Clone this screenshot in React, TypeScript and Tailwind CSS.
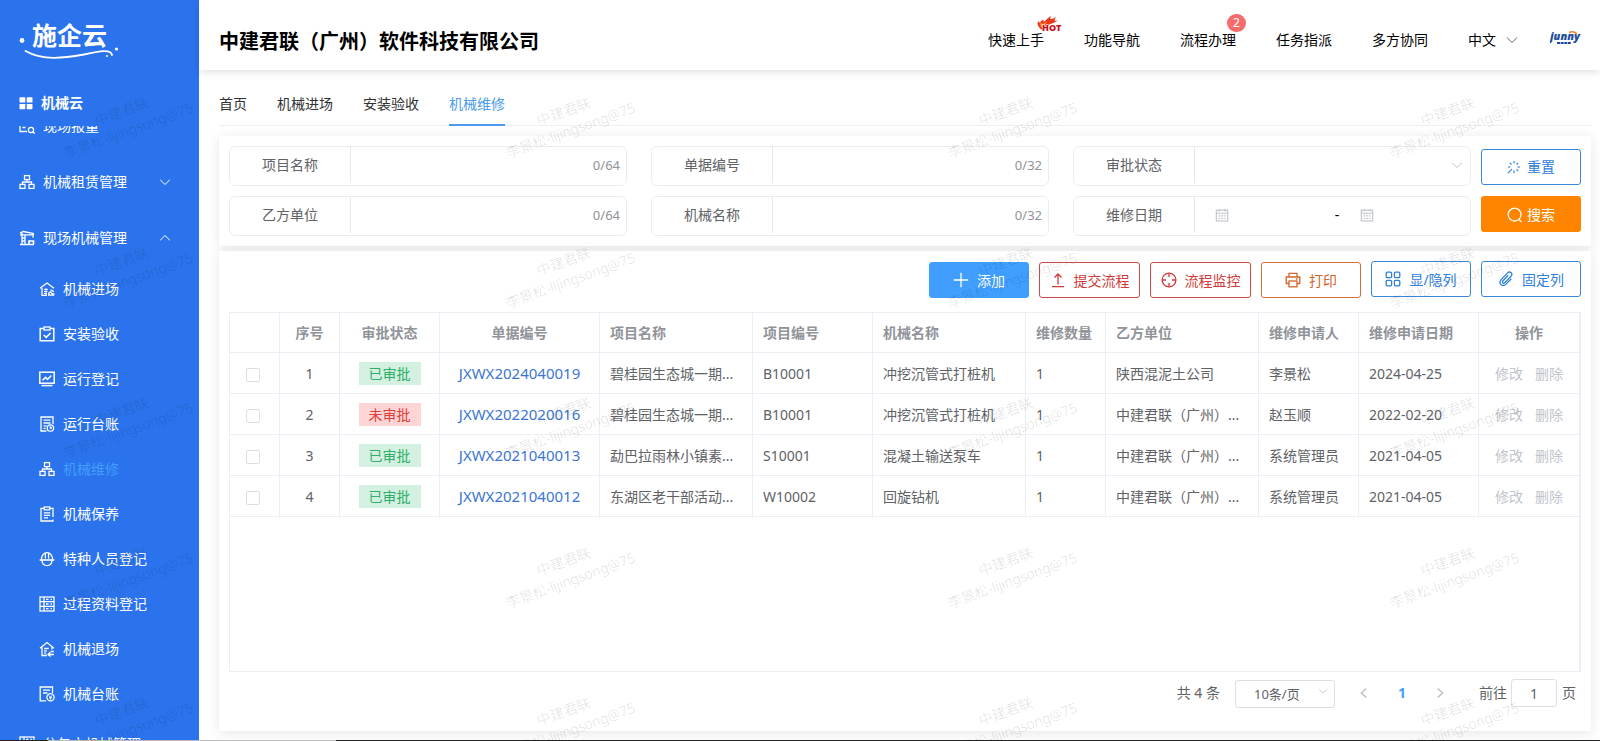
import { useState } from "react";
import type { ReactNode } from "react";

type IconProps = { className?: string; children: ReactNode };

const Icon = ({ className = "size-4", children }: IconProps) => (
    <svg
        viewBox="0 0 16 16"
        fill="none"
        stroke="currentColor"
        strokeWidth="1.3"
        className={`shrink-0 ${className}`}
        aria-hidden="true">
        {children}
    </svg>
);

const icons = {
    grid: (
        <g fill="currentColor" stroke="none">
            <rect x="0.6" y="1.5" width="6.6" height="6" rx="0.6" />
            <rect x="8.8" y="1.5" width="6.6" height="6" rx="0.6" />
            <rect x="0.6" y="9" width="6.6" height="6" rx="0.6" />
            <rect x="8.8" y="9" width="6.6" height="6" rx="0.6" />
        </g>
    ),
    report: (
        <>
            <path d="M8 13.5H1V3h13v4" />
            <circle cx="12" cy="12" r="2.6" />
            <path d="M13.8 13.8l2 2M3.5 6.500h5M3.5 9.500h3" />
        </>
    ),
    network: (
        <>
            <rect x="5.5" y="1.6" width="5" height="4" />
            <rect x="1" y="10.4" width="5" height="4" />
            <rect x="10" y="10.4" width="5" height="4" />
            <path d="M8 5.6V8M3.5 10.4V8h9v2.4" />
        </>
    ),
    crane: (
        <>
            <path d="M1 3.200L4.500 1.500 15 3.600M1 4.800h14M14 4.800v3M3 2v12.500M6 5v9.500M3 8h3M3 11h3" />
            <path d="M1 14.500h14M10 14v-3h4.500v3" strokeWidth="1.7" />
        </>
    ),
    houseIn: (
        <>
            <path d="M1 7.2L8 2l7 5.2M3 7v7.4h5" />
            <path d="M5 8.5h4M5 10.5h3.5M5 12.5h3M7 7v7" strokeWidth="1" />
            <path d="M9 14.2h6M9.6 14c0-2 1-3.2 2.2-3.2l1.2 2h1.8v1.4M11.5 9.2c1.6-.4 2.6.4 3 2" />
        </>
    ),
    clipCheck: (
        <>
            <path d="M5 2.4H1.2v12.4h13.6V2.4H11" strokeWidth="1.5" />
            <rect x="5" y="1" width="6" height="3" />
            <path d="M4.8 9l2.4 2.4 4.4-4.4" strokeWidth="1.6" />
        </>
    ),
    chart: (
        <>
            <rect x="0.8" y="1.2" width="14.4" height="11" strokeWidth="1.5" />
            <path d="M3.5 9.4l3-3 2 2 3.8-4" strokeWidth="1.5" />
            <path d="M2.5 14.6h11" strokeWidth="1.5" />
        </>
    ),
    ledger: (
        <>
            <path d="M7.5 15H2V1h12v7M4.5 4.2h7M4.5 7h7M4.5 9.8h3M4.5 12.4h2" />
            <circle cx="11.4" cy="12" r="3.2" />
            <path d="M11.4 10.2v1.8h1.6" />
        </>
    ),
    clipList: (
        <>
            <path d="M5 2.4H2V15h12v-1.6M14 11V2.4h-3" />
            <rect x="5.2" y="1" width="5.6" height="2.8" />
            <path d="M4.8 6.8h6.4M4.8 9.3h6.4M4.8 11.8h4.2" />
        </>
    ),
    helmet: (
        <>
            <path d="M2.4 8.6C2.4 4.6 4.8 1.6 8 1.6s5.6 3 5.6 7M6.400 2.4v5M9.600 2.4v5" />
            <path d="M0.6 9h14.8" strokeWidth="1.6" />
            <path d="M2.8 9c.4 3.4 2.4 5.6 5.2 5.6s4.8-2.2 5.2-5.6" />
        </>
    ),
    server: (
        <>
            <rect x="1" y="1" width="14" height="14" />
            <path d="M1 5.6h14M1 10.3h14M5 1v14M7 3.4h2.500M11.500 3.4h1.500M7 8h2.500M11.500 8h1.500M7 12.6h2.500M11.500 12.6h1.500" />
        </>
    ),
    houseOut: (
        <>
            <path d="M1 7.2L8 1.6l7 5.6M3 6.5v8h5M13 6v2.5" />
            <path d="M5.2 7.5h4.5M5.2 10h2.5M5.2 12.2h2M15 13.5H9.500M11.5 11l-2.5 2.5 2.5 2M14.8 10.5h-3" />
        </>
    ),
    invoice: (
        <>
            <path d="M7 14.8H1.2V1h12.3v6M4 4.2h7M4 7h4.5" />
            <circle cx="11.5" cy="11.2" r="3.6" />
            <path d="M9.9 9.4l1.6 1.9 1.6-1.9M11.5 11.3v2.3M10 11.8h3" strokeWidth="1" />
        </>
    ),
    down: <path d="M1.5 5L8 11.300 14.5 5" />,
    up: <path d="M1.5 11L8 4.7l6.5 6.3" />,
    left: <path d="M10.5 3L5 8l5.5 5" strokeWidth="1.8" />,
    right: <path d="M5.5 3L11 8l-5.5 5" strokeWidth="1.8" />,
    sparkle: (
        <path d="M8 1v3M8 12v3M12 8h3M3.2 3.2l2 2M10.8 10.8l2 2M12.8 3.2l-2 2M1 8h3M5.6 10.4L1 15" />
    ),
    search: (
        <>
            <circle cx="7.6" cy="7.6" r="6.4" />
            <path d="M11.8 12.3l2.7 2.7" />
        </>
    ),
    plus: <path d="M8 .8v14.4M.8 8h14.4" />,
    upload: <path d="M8 12.5V2M4.500 5.500L8 2l3.500 3.500M2 14.6h12" />,
    monitor: (
        <>
            <circle cx="8" cy="8" r="6.9" />
            <path d="M8 1v4M8 11v4M1 8h4M11 8h4" />
        </>
    ),
    printer: (
        <>
            <path d="M4 5V1.300h8V5M4 11.500H1.2V5h13.600v6.500H12" />
            <rect x="4" y="9" width="8" height="5.8" />
            <path d="M11 7h1.5" />
        </>
    ),
    blocks: (
        <>
            <rect x="1.2" y="1.2" width="5.4" height="5.4" rx="1" />
            <rect x="9.4" y="1.2" width="5.4" height="5.4" rx="1" />
            <rect x="1.2" y="9.4" width="5.4" height="5.4" rx="1" />
            <rect x="9.4" y="9.4" width="5.4" height="5.4" rx="1" />
        </>
    ),
    clip: (
        <path d="M10.2 4.2L4.900 9.8c-1.3 1.4.5 3.2 1.9 1.9L13 5.200c2.3-2.5-.9-5.7-3.4-3.3L3.3 8.4c-3.5 3.7 1.2 8.3 4.8 4.7l5.2-5.4" />
    ),
    calendar: (
        <>
            <rect x="1.5" y="2.5" width="13" height="12.3" />
            <path d="M1.5 6h13M4.8 1v3M11.2 1v3M4 9h2M7 9h2M10 9h2M4 12h2M7 12h2M10 12h2" />
        </>
    ),
};

type IconName = keyof typeof icons;

const subMenu: { icon: IconName; label: string }[] = [
    { icon: "houseIn", label: "机械进场" },
    { icon: "clipCheck", label: "安装验收" },
    { icon: "chart", label: "运行登记" },
    { icon: "ledger", label: "运行台账" },
    { icon: "network", label: "机械维修" },
    { icon: "clipList", label: "机械保养" },
    { icon: "helmet", label: "特种人员登记" },
    { icon: "server", label: "过程资料登记" },
    { icon: "houseOut", label: "机械退场" },
    { icon: "invoice", label: "机械台账" },
];

const MenuGroup = ({
    icon,
    label,
    arrow,
}: {
    icon: IconName;
    label: string;
    arrow?: IconName;
}) => (
    <button className="flex h-14 w-full shrink-0 items-center pl-[19px] pr-7 text-left">
        <Icon>{icons[icon]}</Icon>
        <span className="ml-2 flex-1">{label}</span>
        {arrow && <Icon className="size-3">{icons[arrow]}</Icon>}
    </button>
);

const Sidebar = () => (
    <aside className="flex w-[199px] shrink-0 flex-col overflow-hidden bg-[#2b73ec] text-sm text-white">
        <a href="#" className="mt-5 block pl-4">
            <svg width="110" height="42" viewBox="0 0 110 42" fill="none">
                <text
                    x="16"
                    y="25"
                    fill="white"
                    fontSize="25"
                    fontWeight="700"
                    fontFamily="'Noto Sans CJK SC', sans-serif">
                    施企云
                </text>
                <circle cx="6" cy="20.5" r="2.4" fill="white" />
                <circle cx="100.5" cy="29" r="1.6" fill="white" />
                <circle cx="91" cy="36" r="1" fill="white" />
                <path
                    d="M9.5 31C27 41 48 38 68 34.500 84 31 95 29 96 35"
                    stroke="white"
                    strokeWidth="1.8"
                    strokeLinecap="round"
                />
            </svg>
        </a>
        <div className="mt-8 flex h-[18px] items-center pl-[19px] font-bold">
            <Icon className="size-[14px]">{icons.grid}</Icon>
            <span className="ml-2">机械云</span>
        </div>
        <nav className="mt-[14px] flex-1 overflow-hidden">
            <div className="-mt-7 flex flex-col">
                <MenuGroup icon="report" label="现场报量" />
                <MenuGroup icon="network" label="机械租赁管理" arrow="down" />
                <MenuGroup icon="crane" label="现场机械管理" arrow="up" />
                {subMenu.map((item) => (
                    <a
                        key={item.label}
                        href="#"
                        className="flex h-[45px] shrink-0 items-center gap-2 pl-[39px]">
                        <Icon>{icons[item.icon]}</Icon>
                        <span
                            className={
                                item.label === "机械维修"
                                    ? "text-[#409eff]"
                                    : ""
                            }>
                            {item.label}
                        </span>
                    </a>
                ))}
                <MenuGroup icon="server" label="分包方机械管理" arrow="down" />
            </div>
        </nav>
    </aside>
);

const HotIcon = () => (
    <svg
        className="absolute -right-[19px] -top-[14px]"
        width="26"
        height="16"
        viewBox="0 0 26 16"
        aria-hidden="true">
        <path
            d="M5 14C1 11 0 8 1 5l2 2c0-2 2-3 4-3L6 6c3-1 4-4 8-6-1 2-1 3 0 3 2 0 3-1 5-2-1 2-2 3-1 4l3-.5c-3 2-5 3-8 3.5L9 12z"
            fill="#e8391c"
        />
        <path d="M5 12C3 10 3 8 4 6l1 2c2 0 3-2 5-2-2 2-3 3-3 6z" fill="#ffa52b" />
        <text
            x="5"
            y="15"
            fill="#c8101a"
            stroke="white"
            strokeWidth="1"
            paintOrder="stroke"
            fontSize="9"
            fontWeight="900"
            fontFamily="'Open Sans', sans-serif">
            HOT
        </text>
    </svg>
);

const Header = () => (
    <header className="z-10 flex h-[70px] shrink-0 items-center justify-between bg-white pl-5 pr-[19px] shadow-[0_2px_8px_rgba(0,0,0,0.12)]">
        <h1 className="pt-[14px] text-xl font-bold text-black">
            中建君联（广州）软件科技有限公司
        </h1>
        <nav className="flex items-center gap-10 pt-[10px] text-sm text-black">
            <a href="#" className="relative">
                快速上手
                <HotIcon />
            </a>
            <a href="#">功能导航</a>
            <a href="#" className="relative">
                流程办理
                <span className="absolute -right-[10px] -top-4 flex h-[18px] w-[19px] items-center justify-center rounded-full bg-[#f56c6c] text-xs text-white">
                    2
                </span>
            </a>
            <a href="#">任务指派</a>
            <a href="#">多方协同</a>
            <button className="flex items-center gap-[10px]">
                中文
                <Icon className="size-3 text-[#606266]">{icons.down}</Icon>
            </button>
            <a href="#" className="-ml-2 -mt-1" aria-label="junny">
                <svg width="31" height="15" viewBox="0 0 31 15">
                    <text
                        x="0"
                        y="9"
                        fill="#1d4c9a"
                        fontSize="11"
                        fontWeight="800"
                        fontStyle="italic"
                        fontFamily="'Open Sans', sans-serif">
                        junny
                    </text>
                    <path d="M19 1.500c4-1.500 7-.500 8 2.500" stroke="#f08232" strokeWidth="1.5" fill="none" />
                    <path d="M7 12h14" stroke="#1d4c9a" strokeWidth="2" strokeDasharray="3 0.6" />
                </svg>
            </a>
        </nav>
    </header>
);

const tabs = ["首页", "机械进场", "安装验收", "机械维修"];

const Tabs = () => {
    const [active, setActive] = useState("机械维修");
    return (
        <div className="flex h-14 shrink-0 gap-[30px] border-b border-[#ebeef5] text-sm text-[#303133]">
            {tabs.map((tab) => (
                <button
                    key={tab}
                    onClick={() => setActive(tab)}
                    className={`-mb-px border-b-2 pt-[14px] ${active === tab
                            ? "border-[#4a9bea] text-[#4a9bea]"
                            : "border-transparent"
                        }`}>
                    {tab}
                </button>
            ))}
        </div>
    );
};

const Field = ({
    id,
    label,
    children,
}: {
    id: string;
    label: string;
    children: ReactNode;
}) => (
    <div className="flex h-10 items-start rounded-md border border-[#ebeef0]">
        <label
            htmlFor={id}
            className="flex h-9 w-[121px] shrink-0 items-center justify-center border-r border-[#e6e8eb] text-sm text-[#606266]">
            {label}
        </label>
        <div className="flex h-9 min-w-0 flex-1 items-center">{children}</div>
    </div>
);

const TextField = ({
    id,
    label,
    max,
}: {
    id: string;
    label: string;
    max: number;
}) => {
    const [value, setValue] = useState("");
    return (
        <Field id={id} label={label}>
            <input
                id={id}
                value={value}
                maxLength={max}
                onChange={(e) => setValue(e.target.value)}
                className="h-full min-w-0 flex-1 px-3 text-sm outline-none"
            />
            <span className="pr-1.5 pt-0.5 text-[13px] text-[#909399]">
                {value.length}/{max}
            </span>
        </Field>
    );
};

const SearchForm = () => (
    <form
        onSubmit={(e) => e.preventDefault()}
        className="mt-[10px] flex shrink-0 gap-[10px] bg-white p-[10px] shadow-[0_2px_12px_rgba(0,0,0,0.1)]">
        <div className="grid flex-1 grid-cols-3 gap-x-6 gap-y-[10px]">
            <TextField id="project" label="项目名称" max={64} />
            <TextField id="billNo" label="单据编号" max={32} />
            <Field id="status" label="审批状态">
                <select
                    id="status"
                    className="h-full min-w-0 flex-1 appearance-none px-3 text-sm outline-none">
                    <option value=""></option>
                </select>
                <Icon className="mr-[7px] size-3 text-[#c0c4cc]">
                    {icons.down}
                </Icon>
            </Field>
            <TextField id="partyB" label="乙方单位" max={64} />
            <TextField id="machine" label="机械名称" max={32} />
            <Field id="dateFrom" label="维修日期">
                <div className="flex min-w-0 flex-1 items-center pl-5 text-sm text-black">
                    <Icon className="size-[14px] text-[#c0c4cc]">
                        {icons.calendar}
                    </Icon>
                    <input
                        id="dateFrom"
                        className="w-[103px] min-w-0 px-2 outline-none"
                    />
                    <span className="w-[10px] text-center">-</span>
                    <Icon className="ml-[18px] size-[14px] text-[#c0c4cc]">
                        {icons.calendar}
                    </Icon>
                    <input
                        aria-label="维修日期"
                        className="w-[90px] min-w-0 px-2 outline-none"
                    />
                </div>
            </Field>
        </div>
        <div className="flex w-[100px] flex-col gap-[11px] pt-[3px]">
            <button
                type="reset"
                className="flex h-9 items-center justify-center gap-1.5 rounded-[3px] border border-[#3a87d9] bg-white text-sm text-[#2f80d8]">
                <Icon className="size-[14px]">{icons.sparkle}</Icon>
                重置
            </button>
            <button
                type="submit"
                className="flex h-9 items-center justify-center gap-1 rounded-[3px] bg-[#ff8500] pt-0.5 text-sm text-white">
                <Icon>{icons.search}</Icon>
                搜索
            </button>
        </div>
    </form>
);

const actions: { icon: IconName; label: string; style: string }[] = [
    {
        icon: "plus",
        label: "添加",
        style: "mt-px w-[100px] border-[#409eff] bg-[#409eff] text-white",
    },
    {
        icon: "upload",
        label: "提交流程",
        style: "mt-px w-[101px] border-[#cd4a48] text-[#cf3b38]",
    },
    {
        icon: "monitor",
        label: "流程监控",
        style: "mt-px w-[101px] border-[#cd4a48] text-[#cf3b38]",
    },
    {
        icon: "printer",
        label: "打印",
        style: "mt-px w-[100px] border-[#d0703a] text-[#d0662a]",
    },
    {
        icon: "blocks",
        label: "显/隐列",
        style: "w-[100px] border-[#3a87d9] text-[#2f80d8]",
    },
    {
        icon: "clip",
        label: "固定列",
        style: "w-[100px] border-[#3a87d9] text-[#2f80d8]",
    },
];

const columns = [
    { label: "", width: "w-[50px]" },
    { label: "序号", width: "w-[60px]", center: true },
    { label: "审批状态", width: "w-[100px]", center: true },
    { label: "单据编号", width: "w-[160px]", center: true },
    { label: "项目名称", width: "" },
    { label: "项目编号", width: "w-[120px]" },
    { label: "机械名称", width: "" },
    { label: "维修数量", width: "w-[80px]" },
    { label: "乙方单位", width: "" },
    { label: "维修申请人", width: "w-[100px]" },
    { label: "维修申请日期", width: "w-[120px]" },
    { label: "操作", width: "w-[100px]", center: true },
];

const rows = [
    {
        approved: true,
        bill: "JXWX2024040019",
        project: "碧桂园生态城一期...",
        code: "B10001",
        machine: "冲挖沉管式打桩机",
        party: "陕西混泥土公司",
        applicant: "李景松",
        date: "2024-04-25",
    },
    {
        approved: false,
        bill: "JXWX2022020016",
        project: "碧桂园生态城一期...",
        code: "B10001",
        machine: "冲挖沉管式打桩机",
        party: "中建君联（广州）...",
        applicant: "赵玉顺",
        date: "2022-02-20",
    },
    {
        approved: true,
        bill: "JXWX2021040013",
        project: "勐巴拉雨林小镇素...",
        code: "S10001",
        machine: "混凝土输送泵车",
        party: "中建君联（广州）...",
        applicant: "系统管理员",
        date: "2021-04-05",
    },
    {
        approved: true,
        bill: "JXWX2021040012",
        project: "东湖区老干部活动...",
        code: "W10002",
        machine: "回旋钻机",
        party: "中建君联（广州）...",
        applicant: "系统管理员",
        date: "2021-04-05",
    },
];

const cell = "truncate border-b border-r border-[#ebeef5] px-[10px]";
const textCell = `${cell} pt-0.5`;

const DataTable = () => (
    <div className="mt-[14px] flex-1 border border-r-2 border-[#ebeef5]">
        <table className="w-full table-fixed border-separate border-spacing-0 text-sm text-[#606266]">
            <thead>
                <tr className="h-10">
                    {columns.map((col) => (
                        <th
                            key={col.label}
                            className={`${cell} last:border-r-0 font-bold text-[#909399] ${col.width} ${col.center ? "text-center" : "text-left"}`}>
                            {col.label}
                        </th>
                    ))}
                </tr>
            </thead>
            <tbody>
                {rows.map((row, i) => (
                    <tr key={row.bill} className="h-[41px]">
                        <td className={cell}>
                            <input
                                type="checkbox"
                                aria-label={`选择 ${row.bill}`}
                                className="ml-1.5 mt-1 block size-[14px] appearance-none rounded-[2px] border border-[#dcdfe6] bg-white checked:bg-[#409eff]"
                            />
                        </td>
                        <td className={`${textCell} text-center`}>{i + 1}</td>
                        <td className={`${cell} text-center`}>
                            <span
                                className={`inline-block h-[23px] w-[62px] align-middle leading-6 ${row.approved
                                        ? "bg-[#d3f0e0] text-[#2fae6c]"
                                        : "bg-[#fdd5d5] text-[#e0403c]"
                                    }`}>
                                {row.approved ? "已审批" : "未审批"}
                            </span>
                        </td>
                        <td className={`${textCell} text-center`}>
                            <a href="#" className="text-[15px] text-[#3c76d2]">
                                {row.bill}
                            </a>
                        </td>
                        <td className={textCell}>{row.project}</td>
                        <td className={textCell}>{row.code}</td>
                        <td className={textCell}>{row.machine}</td>
                        <td className={textCell}>1</td>
                        <td className={textCell}>{row.party}</td>
                        <td className={textCell}>{row.applicant}</td>
                        <td className={textCell}>{row.date}</td>
                        <td className={`${textCell} border-r-0`}>
                            <div className="flex justify-center gap-3 text-[#c0c4cc]">
                                <button disabled>修改</button>
                                <button disabled>删除</button>
                            </div>
                        </td>
                    </tr>
                ))}
            </tbody>
        </table>
    </div>
);

const Pagination = () => (
    <div className="flex h-[49px] shrink-0 items-start justify-end pr-[5px] pt-[7px] text-sm text-[#606266]">
        <span className="leading-7">共 4 条</span>
        <div className="relative ml-[15px] mt-px">
            <select
                aria-label="每页条数"
                className="h-7 w-[100px] appearance-none rounded-[3px] border border-[#dcdfe6] bg-white pl-[18px] text-[13px] outline-none">
                <option>10条/页</option>
            </select>
            <Icon className="pointer-events-none absolute right-[7px] top-1.5 size-[10px] text-[#c0c4cc]">
                {icons.down}
            </Icon>
        </div>
        <button
            disabled
            aria-label="上一页"
            className="ml-[22px] flex h-7 w-[14px] items-center text-[#c0c4cc]">
            <Icon className="size-[14px]">{icons.left}</Icon>
        </button>
        <button className="ml-4 h-7 w-[30px] font-bold text-[#409eff]">1</button>
        <button
            disabled
            aria-label="下一页"
            className="ml-4 flex h-7 w-[14px] items-center text-[#c0c4cc]">
            <Icon className="size-[14px]">{icons.right}</Icon>
        </button>
        <label htmlFor="jump" className="ml-8 leading-7">
            前往
        </label>
        <input
            id="jump"
            defaultValue="1"
            className="ml-1 mr-[5px] h-7 w-[46px] rounded-[3px] border border-[#dcdfe6] text-center outline-none"
        />
        <span className="leading-7">页</span>
    </div>
);

const Watermark = () => (
    <div
        aria-hidden="true"
        className="pointer-events-none absolute inset-0 z-20 overflow-hidden">
        <div className="-ml-24 grid w-max grid-cols-[repeat(4,442px)] auto-rows-[150px] pt-[46px]">
            {Array.from({ length: 20 }, (_, i) => (
                <div key={i} className="flex items-center justify-center">
                    <div className="-rotate-20 text-center text-sm font-light leading-5 text-black/15">
                        <div>中建君联</div>
                        <div>李景松-lijingsong@75</div>
                    </div>
                </div>
            ))}
        </div>
    </div>
);

const App = () => {
    return (
        <div className="relative flex h-screen flex-col overflow-hidden bg-white font-['Noto_Sans','Noto_Sans_CJK_SC',sans-serif]">
            <div className="flex min-h-0 flex-1">
                <Sidebar />
                <div className="flex min-w-0 flex-1 flex-col">
                    <Header />
                    <main className="flex min-h-0 flex-1 flex-col pb-[9px] pl-5 pr-[9px]">
                        <Tabs />
                        <SearchForm />
                        <section className="mt-[5px] flex min-h-0 flex-1 flex-col bg-white p-[10px] shadow-[0_2px_12px_rgba(0,0,0,0.1)]">
                            <div className="flex items-start justify-end gap-[10px]">
                                {actions.map((action) => (
                                    <button
                                        key={action.label}
                                        className={`flex h-9 items-center justify-center gap-2 rounded-[3px] border pt-0.5 text-sm ${action.style}`}>
                                        <Icon className="-mt-0.5 size-4">
                                            {icons[action.icon]}
                                        </Icon>
                                        {action.label}
                                    </button>
                                ))}
                            </div>
                            <DataTable />
                            <Pagination />
                        </section>
                    </main>
                </div>
            </div>
            <div className="flex h-px shrink-0">
                <div className="w-12 bg-[#222]" />
                <div className="w-72 bg-[#bbb]" />
                <div className="flex-1 bg-[#222]" />
            </div>
            <Watermark />
        </div>
    );
};

export default App;
